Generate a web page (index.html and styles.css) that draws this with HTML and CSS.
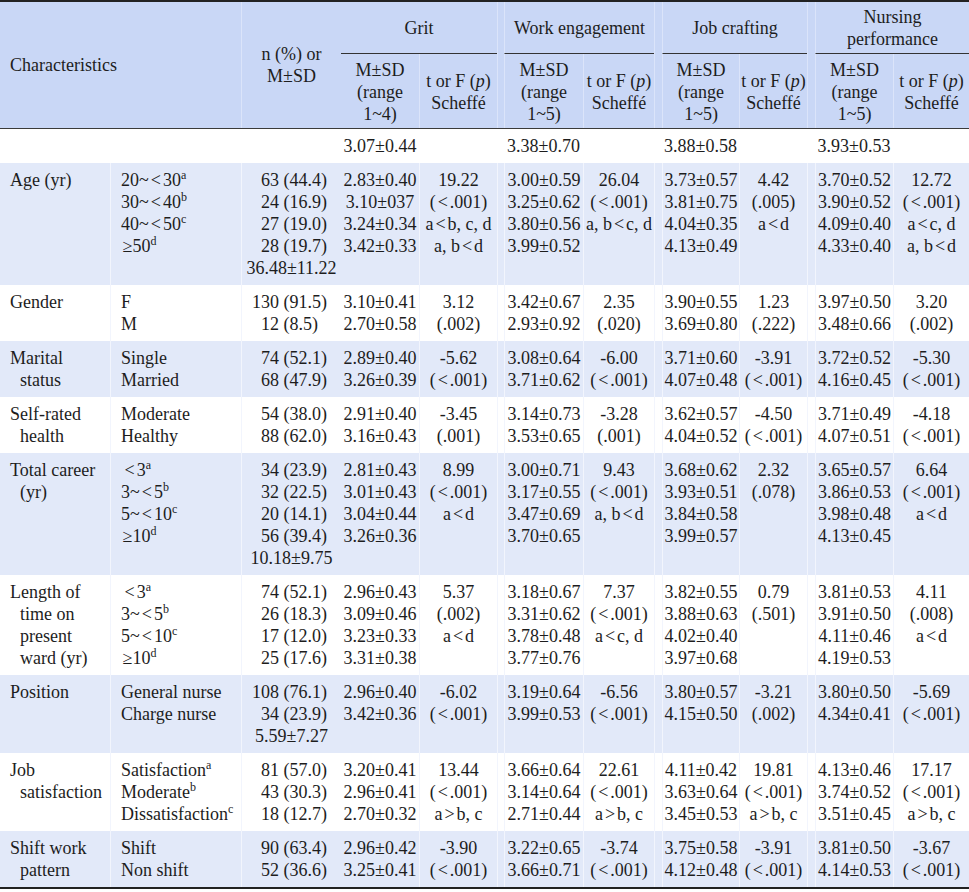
FILE: index.html
```html
<!DOCTYPE html>
<html>
<head>
<meta charset="utf-8">
<link rel="stylesheet" href="styles.css">
</head>
<body>
<table class="tbl">
  <colgroup>
    <col class="w-c1"><col class="w-c2"><col class="w-n">
    <col class="w-gm"><col class="w-gt"><col class="w-sp7">
    <col class="w-wm"><col class="w-wt"><col class="w-sp8">
    <col class="w-jm"><col class="w-jt"><col class="w-sp8">
    <col class="w-pm"><col class="w-pt">
  </colgroup>
  <thead>
    <tr class="h1">
      <th rowspan="2" colspan="2" class="char">Characteristics</th>
      <th rowspan="2" class="ncol sep">n (%) or<br>M±SD</th>
      <th colspan="2" class="grp">Grit</th>
      <th rowspan="2" class="sp sep"></th>
      <th colspan="2" class="grp sep">Work engagement</th>
      <th rowspan="2" class="sp sep"></th>
      <th colspan="2" class="grp sep">Job crafting</th>
      <th rowspan="2" class="sp sep"></th>
      <th colspan="2" class="grp sep">Nursing<br>performance</th>
    </tr>
    <tr class="h2">
      <th>M±SD<br>(range<br>1~4)</th>
      <th class="sep">t or F (<i>p</i>)<br>Scheffé</th>
      <th class="sep">M±SD<br>(range<br>1~5)</th>
      <th class="sep">t or F (<i>p</i>)<br>Scheffé</th>
      <th class="sep">M±SD<br>(range<br>1~5)</th>
      <th class="sep">t or F (<i>p</i>)<br>Scheffé</th>
      <th class="sep">M±SD<br>(range<br>1~5)</th>
      <th class="sep">t or F (<i>p</i>)<br>Scheffé</th>
    </tr>
  </thead>
  <tbody>
    <tr class="total">
      <td class="lab"></td><td class="cat"></td><td class="ncol"></td>
      <td>3.07±0.44</td><td></td><td></td>
      <td>3.38±0.70</td><td></td><td></td>
      <td>3.88±0.58</td><td></td><td></td>
      <td>3.93±0.53</td><td></td>
    </tr>
    <tr class="blue">
      <td class="lab">Age (yr)</td>
      <td class="cat">20~<span class="lt">&lt;</span>30<sup>a</sup><br>30~<span class="lt">&lt;</span>40<sup>b</sup><br>40~<span class="lt">&lt;</span>50<sup>c</sup><br>&#8202;≥50<sup>d</sup></td>
      <td class="ncol">63 (44.4)<br>24 (16.9)<br>27 (19.0)<br>28 (19.7)<span class="ms">36.48±11.22</span></td>
      <td class="nosep">2.83±0.40<br>3.10±037<br>3.24±0.34<br>3.42±0.33</td>
      <td>19.22<br>(<span class="lt">&lt;</span>.001)<br>a<span class="lt">&lt;</span>b, c, d<br>a, b<span class="lt">&lt;</span>d</td>
      <td></td>
      <td>3.00±0.59<br>3.25±0.62<br>3.80±0.56<br>3.99±0.52</td>
      <td>26.04<br>(<span class="lt">&lt;</span>.001)<br>a, b<span class="lt">&lt;</span>c, d</td>
      <td></td>
      <td>3.73±0.57<br>3.81±0.75<br>4.04±0.35<br>4.13±0.49</td>
      <td>4.42<br>(.005)<br>a<span class="lt">&lt;</span>d</td>
      <td></td>
      <td>3.70±0.52<br>3.90±0.52<br>4.09±0.40<br>4.33±0.40</td>
      <td>12.72<br>(<span class="lt">&lt;</span>.001)<br>a<span class="lt">&lt;</span>c, d<br>a, b<span class="lt">&lt;</span>d</td>
    </tr>
    <tr>
      <td class="lab">Gender</td>
      <td class="cat">F<br>M</td>
      <td class="ncol">130 (91.5)<br>12 (8.5)&#8199;</td>
      <td class="nosep">3.10±0.41<br>2.70±0.58</td>
      <td>3.12<br>(.002)</td>
      <td></td>
      <td>3.42±0.67<br>2.93±0.92</td>
      <td>2.35<br>(.020)</td>
      <td></td>
      <td>3.90±0.55<br>3.69±0.80</td>
      <td>1.23<br>(.222)</td>
      <td></td>
      <td>3.97±0.50<br>3.48±0.66</td>
      <td>3.20<br>(.002)</td>
    </tr>
    <tr class="blue">
      <td class="lab">Marital<br>status</td>
      <td class="cat">Single<br>Married</td>
      <td class="ncol">74 (52.1)<br>68 (47.9)</td>
      <td class="nosep">2.89±0.40<br>3.26±0.39</td>
      <td>-5.62<br>(<span class="lt">&lt;</span>.001)</td>
      <td></td>
      <td>3.08±0.64<br>3.71±0.62</td>
      <td>-6.00<br>(<span class="lt">&lt;</span>.001)</td>
      <td></td>
      <td>3.71±0.60<br>4.07±0.48</td>
      <td>-3.91<br>(<span class="lt">&lt;</span>.001)</td>
      <td></td>
      <td>3.72±0.52<br>4.16±0.45</td>
      <td>-5.30<br>(<span class="lt">&lt;</span>.001)</td>
    </tr>
    <tr>
      <td class="lab">Self-rated<br>health</td>
      <td class="cat">Moderate<br>Healthy</td>
      <td class="ncol">54 (38.0)<br>88 (62.0)</td>
      <td class="nosep">2.91±0.40<br>3.16±0.43</td>
      <td>-3.45<br>(.001)</td>
      <td></td>
      <td>3.14±0.73<br>3.53±0.65</td>
      <td>-3.28<br>(.001)</td>
      <td></td>
      <td>3.62±0.57<br>4.04±0.52</td>
      <td>-4.50<br>(<span class="lt">&lt;</span>.001)</td>
      <td></td>
      <td>3.71±0.49<br>4.07±0.51</td>
      <td>-4.18<br>(<span class="lt">&lt;</span>.001)</td>
    </tr>
    <tr class="blue">
      <td class="lab">Total career<br>(yr)</td>
      <td class="cat">&#8202;<span class="lt">&lt;</span>3<sup>a</sup><br>3~<span class="lt">&lt;</span>5<sup>b</sup><br>5~<span class="lt">&lt;</span>10<sup>c</sup><br>&#8202;≥10<sup>d</sup></td>
      <td class="ncol">34 (23.9)<br>32 (22.5)<br>20 (14.1)<br>56 (39.4)<span class="ms">10.18±9.75</span></td>
      <td class="nosep">2.81±0.43<br>3.01±0.43<br>3.04±0.44<br>3.26±0.36</td>
      <td>8.99<br>(<span class="lt">&lt;</span>.001)<br>a<span class="lt">&lt;</span>d</td>
      <td></td>
      <td>3.00±0.71<br>3.17±0.55<br>3.47±0.69<br>3.70±0.65</td>
      <td>9.43<br>(<span class="lt">&lt;</span>.001)<br>a, b<span class="lt">&lt;</span>d</td>
      <td></td>
      <td>3.68±0.62<br>3.93±0.51<br>3.84±0.58<br>3.99±0.57</td>
      <td>2.32<br>(.078)</td>
      <td></td>
      <td>3.65±0.57<br>3.86±0.53<br>3.98±0.48<br>4.13±0.45</td>
      <td>6.64<br>(<span class="lt">&lt;</span>.001)<br>a<span class="lt">&lt;</span>d</td>
    </tr>
    <tr>
      <td class="lab">Length of<br>time on<br>present<br>ward (yr)</td>
      <td class="cat">&#8202;<span class="lt">&lt;</span>3<sup>a</sup><br>3~<span class="lt">&lt;</span>5<sup>b</sup><br>5~<span class="lt">&lt;</span>10<sup>c</sup><br>&#8202;≥10<sup>d</sup></td>
      <td class="ncol">74 (52.1)<br>26 (18.3)<br>17 (12.0)<br>25 (17.6)</td>
      <td class="nosep">2.96±0.43<br>3.09±0.46<br>3.23±0.33<br>3.31±0.38</td>
      <td>5.37<br>(.002)<br>a<span class="lt">&lt;</span>d</td>
      <td></td>
      <td>3.18±0.67<br>3.31±0.62<br>3.78±0.48<br>3.77±0.76</td>
      <td>7.37<br>(<span class="lt">&lt;</span>.001)<br>a<span class="lt">&lt;</span>c, d</td>
      <td></td>
      <td>3.82±0.55<br>3.88±0.63<br>4.02±0.40<br>3.97±0.68</td>
      <td>0.79<br>(.501)</td>
      <td></td>
      <td>3.81±0.53<br>3.91±0.50<br>4.11±0.46<br>4.19±0.53</td>
      <td>4.11<br>(.008)<br>a<span class="lt">&lt;</span>d</td>
    </tr>
    <tr class="blue">
      <td class="lab">Position</td>
      <td class="cat">General nurse<br>Charge nurse</td>
      <td class="ncol">108 (76.1)<br>34 (23.9)<span class="ms">5.59±7.27</span></td>
      <td class="nosep">2.96±0.40<br>3.42±0.36</td>
      <td>-6.02<br>(<span class="lt">&lt;</span>.001)</td>
      <td></td>
      <td>3.19±0.64<br>3.99±0.53</td>
      <td>-6.56<br>(<span class="lt">&lt;</span>.001)</td>
      <td></td>
      <td>3.80±0.57<br>4.15±0.50</td>
      <td>-3.21<br>(.002)</td>
      <td></td>
      <td>3.80±0.50<br>4.34±0.41</td>
      <td>-5.69<br>(<span class="lt">&lt;</span>.001)</td>
    </tr>
    <tr>
      <td class="lab">Job<br>satisfaction</td>
      <td class="cat">Satisfaction<sup>a</sup><br>Moderate<sup>b</sup><br>Dissatisfaction<sup>c</sup></td>
      <td class="ncol">81 (57.0)<br>43 (30.3)<br>18 (12.7)</td>
      <td class="nosep">3.20±0.41<br>2.96±0.41<br>2.70±0.32</td>
      <td>13.44<br>(<span class="lt">&lt;</span>.001)<br>a<span class="lt">&gt;</span>b, c</td>
      <td></td>
      <td>3.66±0.64<br>3.14±0.64<br>2.71±0.44</td>
      <td>22.61<br>(<span class="lt">&lt;</span>.001)<br>a<span class="lt">&gt;</span>b, c</td>
      <td></td>
      <td>4.11±0.42<br>3.63±0.64<br>3.45±0.53</td>
      <td>19.81<br>(<span class="lt">&lt;</span>.001)<br>a<span class="lt">&gt;</span>b, c</td>
      <td></td>
      <td>4.13±0.46<br>3.74±0.52<br>3.51±0.45</td>
      <td>17.17<br>(<span class="lt">&lt;</span>.001)<br>a<span class="lt">&gt;</span>b, c</td>
    </tr>
    <tr class="blue">
      <td class="lab">Shift work<br>pattern</td>
      <td class="cat">Shift<br>Non shift</td>
      <td class="ncol">90 (63.4)<br>52 (36.6)</td>
      <td class="nosep">2.96±0.42<br>3.25±0.41</td>
      <td>-3.90<br>(<span class="lt">&lt;</span>.001)</td>
      <td></td>
      <td>3.22±0.65<br>3.66±0.71</td>
      <td>-3.74<br>(<span class="lt">&lt;</span>.001)</td>
      <td></td>
      <td>3.75±0.58<br>4.12±0.48</td>
      <td>-3.91<br>(<span class="lt">&lt;</span>.001)</td>
      <td></td>
      <td>3.81±0.50<br>4.14±0.53</td>
      <td>-3.67<br>(<span class="lt">&lt;</span>.001)</td>
    </tr>
  </tbody>
</table>
</body>
</html>
```

FILE: styles.css
```css
html, body {
  margin: 0;
  padding: 0;
  background: #ffffff;
}

body {
  font-family: "Liberation Serif", "Times New Roman", serif;
  font-size: 18px;
  color: #1d1d1d;
}

.tbl {
  width: 969px;
  table-layout: fixed;
  border-collapse: separate;
  border-spacing: 0;
  border-top: 2px solid #222;
  border-bottom: 2px solid #222;
  line-height: 22px;
}

.w-c1 { width: 110px; }
.w-c2 { width: 131px; }
.w-n { width: 100px; }
.w-gm { width: 78px; }
.w-gt { width: 78px; }
.w-sp7 { width: 7px; }
.w-sp8 { width: 8px; }
.w-wm { width: 79px; }
.w-wt { width: 71px; }
.w-jm { width: 77px; }
.w-jt { width: 68px; }
.w-pm { width: 78px; }
.w-pt { width: 76px; }

thead th {
  background: #c9d7f6;
  font-weight: normal;
  padding: 0;
  vertical-align: middle;
  text-align: center;
  white-space: nowrap;
}

thead th.sep,
.h2 th.sep {
  border-left: 1px solid #dbe4fa;
}

.h1 th.grp {
  padding: 4px 0 3px;
  border-bottom: 1px solid #333;
}

.h1 th.char {
  text-align: left;
  padding-left: 10px;
}

.h2 th {
  padding: 5px 0 3px;
}

tbody td {
  padding: 6px 0 6px;
  vertical-align: top;
  text-align: center;
  white-space: nowrap;
  border-left: 1px solid #f2f5fd;
}

tbody td.lab,
tbody td.nosep {
  border-left: none;
}

tbody tr.total td {
  border-top: 1px solid #3a3a3a;
  border-left: none;
}

tbody tr.blue td {
  background: #e2e9f9;
}

td.lab {
  text-align: left;
  padding-left: 20px;
  text-indent: -10px;
}

td.cat {
  text-align: left;
  padding-left: 10px;
}

td.ncol {
  text-align: right;
  padding-right: 14px;
}

.ms {
  display: block;
  text-align: center;
  margin-right: -14px;
}

.lt {
  padding: 0 2px;
}

sup {
  font-size: 12px;
  line-height: 0;
  vertical-align: 7px;
}

i {
  font-style: italic;
}
```
